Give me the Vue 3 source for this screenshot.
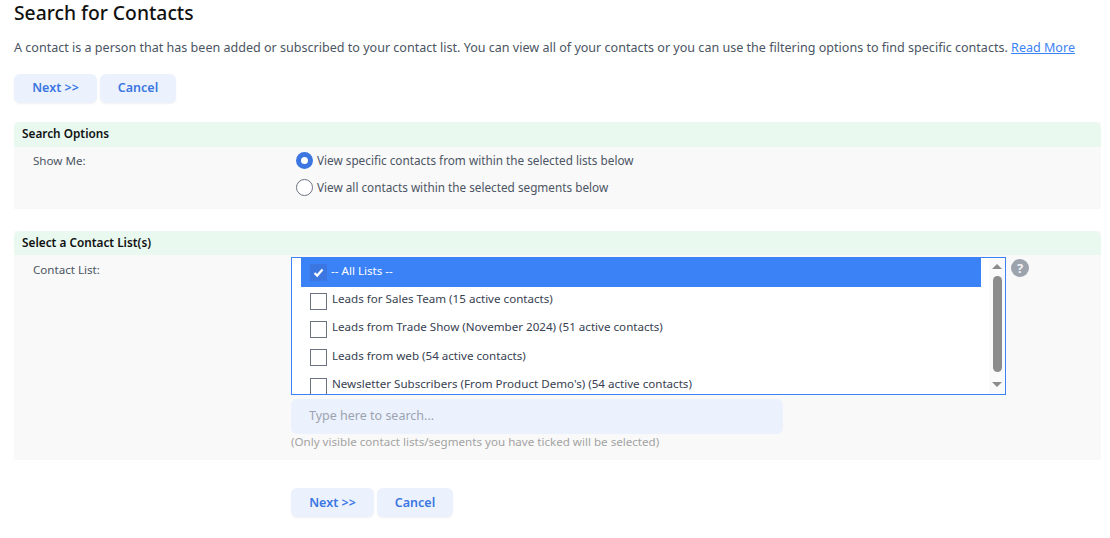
<script setup>
const lists = [
  { name: '-- All Lists --', checked: true },
  { name: 'Leads for Sales Team (15 active contacts)' },
  { name: 'Leads from Trade Show (November 2024) (51 active contacts)' },
  { name: 'Leads from web (54 active contacts)' },
  { name: "Newsletter Subscribers (From Product Demo's) (54 active contacts)" }
]
</script>

<template>
  <div class="page">
    <h1 class="title">Search for Contacts</h1>
    <p class="intro">A contact is a person that has been added or subscribed to your contact list. You can view all of your contacts or you can use the filtering options to find specific contacts. <a class="more" href="#">Read More</a></p>
    <div class="actions top">
      <button class="btn next">Next &gt;&gt;</button>
      <button class="btn cancel">Cancel</button>
    </div>

    <section class="panel first">
      <h2 class="head">Search Options</h2>
      <div class="row options">
        <div class="label">Show Me:</div>
        <div class="radios">
          <label class="radio"><span class="dot on"></span><span class="radio-text">View specific contacts from within the selected lists below</span></label>
          <label class="radio"><span class="dot"></span><span class="radio-text">View all contacts within the selected segments below</span></label>
        </div>
      </div>
    </section>

    <section class="panel second">
      <h2 class="head">Select a Contact List(s)</h2>
      <div class="row lists">
        <div class="label">Contact List:</div>
        <div class="field">
          <div class="picker">
            <div class="listbox">
              <div class="items">
                <div v-for="item in lists" :key="item.name" class="item" :class="{ sel: item.checked }">
                  <span class="box" :class="{ ticked: item.checked }">
                    <svg v-if="item.checked" viewBox="0 0 17 17" width="17" height="17"><path d="M4.5 9 7.2 11.6 12.5 5.6" fill="none" stroke="#fff" stroke-width="2.2"/></svg>
                  </span>
                  <span class="name">{{ item.name }}</span>
                </div>
              </div>
              <div class="scroll">
                <span class="arrow up"></span>
                <span class="thumb"></span>
                <span class="arrow down"></span>
              </div>
            </div>
            <span class="help">?</span>
          </div>
          <input class="search" placeholder="Type here to search..." />
          <div class="note">(Only visible contact lists/segments you have ticked will be selected)</div>
        </div>
      </div>
    </section>

    <div class="actions bottom">
      <button class="btn next">Next &gt;&gt;</button>
      <button class="btn cancel">Cancel</button>
    </div>
  </div>
</template>

<style scoped>
.page {
  width: 1087px;
  height: 538px;
  padding-left: 14px;
  overflow: hidden;
  font-family: "Noto Sans", sans-serif;
  font-size: 11.6px;
  color: #4b5563;
}
.title { margin: 0; padding-top: 1px; font-size: 19.3px; line-height: 24px; font-weight: 500; color: #111; }
.intro { margin: 15px 0 0; font-size: 12.56px; line-height: 16px; white-space: nowrap; }
.more { color: #3b82f6; text-decoration: underline; }
.actions { display: flex; gap: 3px; }
.top { margin-top: 18px; }
.top .btn { padding-bottom: 2px; }
.bottom { margin: 28px 0 0 277px; }
.btn {
  height: 29px;
  border: 0;
  border-radius: 6px;
  background: #ebf2fe;
  box-shadow: 0 1px 2px rgba(0, 0, 0, .06);
  color: #3b76e1;
  font: 600 12.5px "Noto Sans", sans-serif;
  padding: 0;
}
.next { width: 83px; }
.cancel { width: 76px; }
.panel { background: #f9f9f9; }
.first { margin-top: 19px; height: 87px; }
.second { margin-top: 22px; height: 229px; }
.head {
  margin: 0;
  height: 25px;
  padding-left: 8px;
  background: #e9f9f0;
  border-radius: 6px 6px 0 0;
  font-size: 11.8px;
  line-height: 22px;
  font-weight: 600;
  color: #111;
}
.second .head { height: 24px; }
.row { display: flex; }
.label { width: 258px; padding-left: 19px; flex: none; line-height: 16px; }
.options .label { padding-top: 6px; }
.lists .label { padding-top: 7px; }
.radio { display: flex; align-items: center; height: 27px; gap: 4px; margin-left: 5px; font-size: 11.75px; }
.radio-text { padding-bottom: 2px; }
.dot { width: 17px; height: 17px; box-sizing: border-box; border-radius: 50%; border: 1px solid #6b7280; background: #fff; }
.dot.on { border: 5px solid #3b76e1; }
.field { width: 740px; padding-top: 2px; }
.picker { display: flex; gap: 5px; align-items: flex-start; }
.listbox {
  width: 715px;
  height: 138px;
  box-sizing: border-box;
  border: 1px solid #3b82f6;
  background: #fff;
  display: flex;
  overflow: hidden;
}
.items { width: 680px; margin-left: 9px; flex: none; }
.item { height: 28.3px; display: flex; align-items: center; gap: 5px; padding-left: 9px; color: #374151; }
.item.sel { height: 29px; background: #3b82f6; color: #fff; gap: 4px; }
.name { padding-bottom: 5px; }
.item.sel .name { padding-bottom: 4px; }
.box { width: 17px; height: 17px; box-sizing: border-box; border: 1px solid #6b7280; background: #fff; flex: none; }
.box.ticked { border: 0; background: #3b76e1; }
.box svg { display: block; }
.scroll { flex: 1; margin-left: 8px; background: #fafafa; display: flex; flex-direction: column; align-items: center; padding: 6px 0 7px; box-sizing: border-box; }
.thumb { width: 9px; flex: 1; margin: 7px 0 10px; border-radius: 5px; background: #8c8c8c; }
.arrow { width: 0; height: 0; border-left: 5px solid transparent; border-right: 5px solid transparent; }
.up { border-bottom: 5px solid #8c8c8c; }
.down { border-top: 5px solid #8c8c8c; }
.help {
  width: 18px;
  height: 18px;
  margin-top: 2px;
  border-radius: 50%;
  background: #9ca3af;
  color: #f3f4f6;
  font-weight: 700;
  font-size: 13px;
  line-height: 18px;
  text-align: center;
}
.search {
  display: block;
  width: 492px;
  height: 35px;
  margin-top: 4px;
  box-sizing: border-box;
  border: 0;
  border-radius: 6px;
  background: #ebf2fe;
  padding: 0 18px 2px;
  font: 12.5px "Noto Sans", sans-serif;
  color: #374151;
}
.search::placeholder { color: #9ca3af; opacity: 1; }
.note { margin-top: 0; line-height: 16px; color: #a3a3a3; }
</style>
